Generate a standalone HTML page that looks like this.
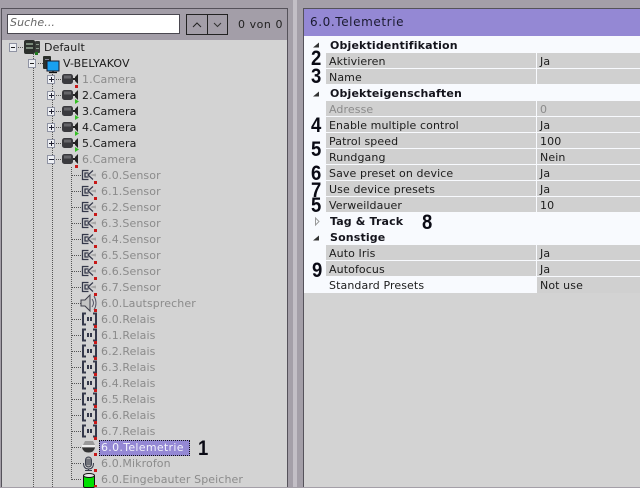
<!DOCTYPE html>
<html><head><meta charset="utf-8"><style>
html,body{margin:0;padding:0}
body{width:640px;height:487px;overflow:hidden;position:relative;background:#a49fa8;font:11px/16px "DejaVu Sans","Liberation Sans",sans-serif;color:#1c1c1c}
div,svg,span{position:absolute;box-sizing:border-box}
.t{white-space:nowrap;height:16px;letter-spacing:.1px;margin-top:1px}
.g{color:#8b8b8b}
.i{left:0;top:0;width:640px;height:487px;overflow:visible}
.c{left:326px;width:210px;height:15px;background:#d0d0d0}
.v{left:537px;width:103px;height:15px;background:#d0d0d0}
.l{left:329px}.w{left:540px}
.s{left:330px;font-weight:bold;letter-spacing:.15px;color:#14141c}
.n{font:bold 21px/21px "Liberation Sans",sans-serif;color:#0a0a14;white-space:nowrap;transform:scaleX(.88);transform-origin:0 0}
</style></head><body>
<div style="left:293px;top:0;width:4px;height:487px;background:#c3bfc6"></div>
<div style="left:1px;top:8px;width:287px;height:479px;background:#d3d3d3;border:1px solid #55525a;border-bottom:0"></div>
<div style="left:2px;top:9px;width:285px;height:31px;background:#a39ea8"></div>
<div style="left:7px;top:14px;width:173px;height:20px;background:#fff;border:1px solid #4a4850"></div>
<div class="t" style="left:10px;top:14px;color:#666;font-style:italic">Suche...</div>
<div style="left:186px;top:14px;width:22px;height:21px;border:1px solid #222;background:#a39ea8"></div>
<div style="left:207px;top:14px;width:21px;height:21px;border:1px solid #222;background:#a39ea8"></div>
<div class="t" style="left:238px;top:16px;color:#222;letter-spacing:.55px">0 von 0</div>

<svg class="i" viewBox="0 0 640 487" xmlns="http://www.w3.org/2000/svg">
<defs>
<g id="cam"><rect x="0" y="-5" width="11" height="10" rx="2.500" fill="#3a3a3e"/><rect x="2" y="-3.500" width="7" height="3" fill="#66666a"/><path d="M11-1h2V1H11z" fill="#222"/><path d="M13-2l3-3V5l-3-3z" fill="#222"/></g>
<g id="sen"><path d="M7 0l7-1.500v3z" fill="#a8a8a8"/><path d="M6.500-4.500H.5V4.500H6.500M6.500-2H3V2H6.500" fill="none" stroke="#34384a" stroke-width="1.300"/><path d="M11-4.500L6 0l5 4.500" fill="none" stroke="#34384a" stroke-width="1.200"/></g>
<g id="rel"><path d="M4-5.500H1V5.500H4M11-5.500h3V5.500h-3" fill="none" stroke="#34384a" stroke-width="2"/><rect x="5" y="-2" width="2" height="4" fill="#34384a"/><rect x="8" y="-2" width="2" height="4" fill="#34384a"/></g>
<g id="box"><rect x=".5" y="-3.500" width="7" height="8" fill="#eef0f4" stroke="#8f93a3"/></g>
</defs>
<g fill="none" stroke="#555" stroke-dasharray="1 1">
<path d="M33.500 54V487M52.500 70V487M71.500 167V480"/>
<path d="M18 47.500h6M38 63.500h5M56 79.500h5M56 95.500h5M56 111.500h5M56 127.500h5M56 143.500h5M56 159.500h5"/>
<path d="M72 175.500h10M72 191.500h10M72 207.500h10M72 223.500h10M72 239.500h10M72 255.500h10M72 271.500h10M72 287.500h10M72 303.500h9M72 319.500h10M72 335.500h10M72 351.500h10M72 367.500h10M72 383.500h10M72 399.500h10M72 415.500h10M72 431.500h10M72 447.500h10M72 463.500h10M72 479.500h10"/>
</g>
<g>
<use href="#box" x="9" y="47"/><path d="M11 47.500h4" stroke="#222"/>
<use href="#box" x="28" y="63"/><path d="M30 63.500h4" stroke="#222"/>
<use href="#box" x="47" y="79"/><path d="M49 79.500h5M51.500 77v5" stroke="#223"/>
<use href="#box" x="47" y="95"/><path d="M49 95.500h5M51.500 93v5" stroke="#223"/>
<use href="#box" x="47" y="111"/><path d="M49 111.500h5M51.500 109v5" stroke="#223"/>
<use href="#box" x="47" y="127"/><path d="M49 127.500h5M51.500 125v5" stroke="#223"/>
<use href="#box" x="47" y="143"/><path d="M49 143.500h5M51.500 141v5" stroke="#223"/>
<use href="#box" x="47" y="159"/><path d="M49 159.500h5" stroke="#223"/>
</g>
<path d="M193 27l4-4 4 4" fill="none" stroke="#222"/><path d="M214 23l3.500 3.500 3.500-3.500" fill="none" stroke="#333"/>
<g><rect x="24" y="40" width="11" height="14" rx="2" fill="#2c302c"/><rect x="26" y="43" width="7" height="2" fill="#7a8a7a"/><rect x="26" y="47" width="7" height="2" fill="#7a8a7a"/><rect x="30" y="53" width="2" height="1" fill="#333"/><rect x="35" y="41" width="5" height="12" rx="1" fill="#3a3e3a"/><rect x="36" y="44" width="3" height="1" fill="#8a9a8a"/><rect x="36" y="48" width="3" height="1" fill="#8a9a8a"/><rect x="35" y="52" width="3" height="3" fill="#1f7a1f"/></g>
<g><rect x="43" y="56" width="8" height="13" rx="1" fill="#2b302b"/><rect x="45" y="59" width="4" height="1" fill="#889"/><rect x="47" y="61" width="12" height="10" fill="#18a0f0" stroke="#1a1a2a"/><path d="M53 71v2M49 72.500h8" stroke="#111" stroke-width="1.200"/></g>
<use href="#cam" x="62" y="79"/><rect x="75" y="85" width="3" height="3" fill="#c81818"/>
<use href="#cam" x="62" y="95"/><path d="M75 99l4 2.500-4 2.500z" fill="#35c024"/>
<use href="#cam" x="62" y="111"/><path d="M75 115l4 2.500-4 2.500z" fill="#35c024"/>
<use href="#cam" x="62" y="127"/><path d="M75 131l4 2.500-4 2.500z" fill="#35c024"/>
<use href="#cam" x="62" y="143"/><path d="M75 147l4 2.500-4 2.500z" fill="#35c024"/>
<use href="#cam" x="62" y="159"/><rect x="75" y="165" width="3" height="3" fill="#c81818"/>
<use href="#sen" x="82" y="175"/><use href="#sen" x="82" y="191"/><use href="#sen" x="82" y="207"/><use href="#sen" x="82" y="223"/><use href="#sen" x="82" y="239"/><use href="#sen" x="82" y="255"/><use href="#sen" x="82" y="271"/><use href="#sen" x="82" y="287"/>
<path d="M81 300h4l5-5v16l-5-5h-4z" fill="#c4c4c4" stroke="#3c3c48"/><path d="M92 299q3 4 0 8M94 296q4 7 0 14" fill="none" stroke="#556"/>
<use href="#rel" x="82" y="319"/><use href="#rel" x="82" y="335"/><use href="#rel" x="82" y="351"/><use href="#rel" x="82" y="367"/><use href="#rel" x="82" y="383"/><use href="#rel" x="82" y="399"/><use href="#rel" x="82" y="415"/><use href="#rel" x="82" y="431"/>
<path d="M85 441h8l2 4H83z" fill="#999"/><path d="M82 445h13v2H82z" fill="#eee"/><path d="M82 447.500h13q-1 5-6.500 5t-6.500-5z" fill="#333"/><path d="M82 447h13v1H82z" fill="#777"/>
<rect x="85.500" y="457" width="6" height="10" rx="3" fill="#aaa" stroke="#3a3e4c"/><path d="M86 460h5M86 462h5M86 464h5" stroke="#3a3e4c"/><path d="M83.500 463q0 6 5 6t5-6M88.500 469v1M85 470.500h7" fill="none" stroke="#3a3e4c"/>
<rect x="83.500" y="475.500" width="11" height="12" rx="1.500" fill="#00e000" stroke="#111"/><ellipse cx="89" cy="475.500" rx="5.500" ry="2" fill="#e8e8e8" stroke="#111"/>
<g fill="#c81818"><rect x="94" y="181" width="3" height="3"/><rect x="94" y="197" width="3" height="3"/><rect x="94" y="213" width="3" height="3"/><rect x="94" y="229" width="3" height="3"/><rect x="94" y="245" width="3" height="3"/><rect x="94" y="261" width="3" height="3"/><rect x="94" y="277" width="3" height="3"/><rect x="94" y="293" width="3" height="3"/><rect x="94" y="309" width="3" height="3"/><rect x="94" y="325" width="3" height="3"/><rect x="94" y="341" width="3" height="3"/><rect x="94" y="357" width="3" height="3"/><rect x="94" y="373" width="3" height="3"/><rect x="94" y="389" width="3" height="3"/><rect x="94" y="405" width="3" height="3"/><rect x="94" y="421" width="3" height="3"/><rect x="94" y="437" width="3" height="3"/><rect x="94" y="453" width="3" height="3"/><rect x="94" y="469" width="3" height="3"/><rect x="94" y="485" width="3" height="2"/></g>
</svg>

<div class="t" style="left:44px;top:39px">Default</div>
<div class="t" style="left:63px;top:55px">V-BELYAKOV</div>
<div class="t g" style="left:82px;top:71px">1.Camera</div>
<div class="t" style="left:82px;top:87px">2.Camera</div>
<div class="t" style="left:82px;top:103px">3.Camera</div>
<div class="t" style="left:82px;top:119px">4.Camera</div>
<div class="t" style="left:82px;top:135px">5.Camera</div>
<div class="t g" style="left:82px;top:151px">6.Camera</div>
<div class="t g" style="left:101px;top:167px">6.0.Sensor</div>
<div class="t g" style="left:101px;top:183px">6.1.Sensor</div>
<div class="t g" style="left:101px;top:199px">6.2.Sensor</div>
<div class="t g" style="left:101px;top:215px">6.3.Sensor</div>
<div class="t g" style="left:101px;top:231px">6.4.Sensor</div>
<div class="t g" style="left:101px;top:247px">6.5.Sensor</div>
<div class="t g" style="left:101px;top:263px">6.6.Sensor</div>
<div class="t g" style="left:101px;top:279px">6.7.Sensor</div>
<div class="t g" style="left:101px;top:295px">6.0.Lautsprecher</div>
<div class="t g" style="left:101px;top:311px">6.0.Relais</div>
<div class="t g" style="left:101px;top:327px">6.1.Relais</div>
<div class="t g" style="left:101px;top:343px">6.2.Relais</div>
<div class="t g" style="left:101px;top:359px">6.3.Relais</div>
<div class="t g" style="left:101px;top:375px">6.4.Relais</div>
<div class="t g" style="left:101px;top:391px">6.5.Relais</div>
<div class="t g" style="left:101px;top:407px">6.6.Relais</div>
<div class="t g" style="left:101px;top:423px">6.7.Relais</div>
<div style="left:99px;top:440px;width:91px;height:16px;background:#9488d4;border:1px dotted #111"></div>
<div class="t" style="left:101px;top:439px;color:#f2f2fa;letter-spacing:.3px">6.0.Telemetrie</div>
<div class="t g" style="left:101px;top:455px">6.0.Mikrofon</div>
<div class="t g" style="left:101px;top:471px">6.0.Eingebauter Speicher</div>
<div class="n" style="left:198px;top:438px">1</div>

<div style="left:303px;top:8px;width:337px;height:479px;background:#d3d3d3;border-left:1px solid #55525a;border-top:1px solid #55525a"></div>
<div style="left:304px;top:9px;width:336px;height:27px;background:#9488d4"></div>
<div class="t" style="left:310px;top:13px;font-size:12px;color:#1a1a30;letter-spacing:.6px">6.0.Telemetrie</div>
<div style="left:304px;top:36px;width:336px;height:257px;background:#f8fafe"></div>

<div class="c" style="top:53px"></div><div class="v" style="top:53px"></div>
<div class="c" style="top:69px"></div><div class="v" style="top:69px"></div>
<div class="c" style="top:101px"></div><div class="v" style="top:101px"></div>
<div class="c" style="top:117px"></div><div class="v" style="top:117px"></div>
<div class="c" style="top:133px"></div><div class="v" style="top:133px"></div>
<div class="c" style="top:149px"></div><div class="v" style="top:149px"></div>
<div class="c" style="top:165px"></div><div class="v" style="top:165px"></div>
<div class="c" style="top:181px"></div><div class="v" style="top:181px"></div>
<div class="c" style="top:197px"></div><div class="v" style="top:197px"></div>
<div class="c" style="top:245px"></div><div class="v" style="top:245px"></div>
<div class="c" style="top:261px"></div><div class="v" style="top:261px"></div>
<div class="v" style="top:277px;height:16px"></div>

<svg class="i" viewBox="0 0 640 487" xmlns="http://www.w3.org/2000/svg">
<path d="M313 47.500l6-5v5z" fill="#333"/><path d="M313 96.500l6-5v5z" fill="#333"/><path d="M313 240.500l6-5v5z" fill="#333"/>
<path d="M315.500 218l3.500 3.500-3.500 3.500z" fill="none" stroke="#999"/>
</svg>

<div class="t s" style="top:37px">Objektidentifikation</div>
<div class="t l" style="top:53px">Aktivieren</div><div class="t w" style="top:53px">Ja</div>
<div class="t l" style="top:69px">Name</div>
<div class="t s" style="top:85px">Objekteigenschaften</div>
<div class="t l g" style="top:101px">Adresse</div><div class="t w g" style="top:101px">0</div>
<div class="t l" style="top:117px">Enable multiple control</div><div class="t w" style="top:117px">Ja</div>
<div class="t l" style="top:133px">Patrol speed</div><div class="t w" style="top:133px">100</div>
<div class="t l" style="top:149px">Rundgang</div><div class="t w" style="top:149px">Nein</div>
<div class="t l" style="top:165px">Save preset on device</div><div class="t w" style="top:165px">Ja</div>
<div class="t l" style="top:181px">Use device presets</div><div class="t w" style="top:181px">Ja</div>
<div class="t l" style="top:197px">Verweildauer</div><div class="t w" style="top:197px">10</div>
<div class="t s" style="top:213px">Tag &amp; Track</div>
<div class="t s" style="top:229px">Sonstige</div>
<div class="t l" style="top:245px">Auto Iris</div><div class="t w" style="top:245px">Ja</div>
<div class="t l" style="top:261px">Autofocus</div><div class="t w" style="top:261px">Ja</div>
<div class="t l" style="top:277px">Standard Presets</div><div class="t w" style="top:277px">Not use</div>

<div class="n" style="left:311px;top:48px">2</div>
<div class="n" style="left:311px;top:66px">3</div>
<div class="n" style="left:311px;top:115px">4</div>
<div class="n" style="left:311px;top:139px">5</div>
<div class="n" style="left:311px;top:163px">6</div>
<div class="n" style="left:311px;top:180px">7</div>
<div class="n" style="left:311px;top:195px">5</div>
<div class="n" style="left:422px;top:212px">8</div>
<div class="n" style="left:312px;top:260px">9</div>
</body></html>
